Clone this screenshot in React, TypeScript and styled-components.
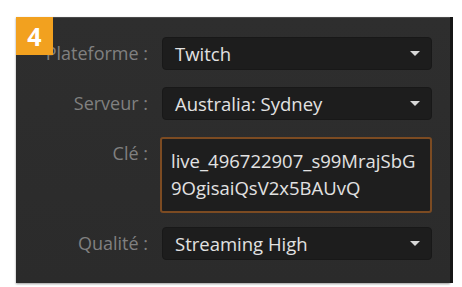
import * as React from "react";
import styled, { createGlobalStyle } from "styled-components";

const GlobalStyle = createGlobalStyle`
  html, body {
    margin: 0;
    padding: 0;
    background: #ffffff;
    font-family: "Open Sans", "Noto Sans", sans-serif;
  }
`;

const PageStyled = styled.div`
  width: 462px;
  height: 287px;
  padding: 17px 0 0 16px;
  box-sizing: border-box;
`;

const Panel = styled.div`
  position: relative;
  width: 434px;
  height: 266px;
  box-sizing: border-box;
  background: linear-gradient(#2e2e2e, #2b2b2b);
  border-top: 1px solid #4a4a4a;
  box-shadow: 3px 0 0 #151515, 0 1px 2px rgba(0, 0, 0, 0.4);
  padding: 19px 18px 0 0;
  display: grid;
  grid-template-columns: 132px 1fr;
  align-content: start;
  column-gap: 14px;
  row-gap: 17px;
  align-items: start;
`;

const Badge = styled.div`
  position: absolute;
  left: 0;
  top: -1px;
  width: 37px;
  height: 38px;
  background: #f2a11f;
  color: #ffffff;
  font-family: "Open Sans", sans-serif;
  font-weight: 700;
  font-size: 25px;
  line-height: 38px;
  text-align: center;
  z-index: 2;
`;

const Label = styled.div`
  color: #808080;
  font-size: 18px;
  text-align: right;
  line-height: 33px;
  white-space: nowrap;
`;

const Select = styled.div`
  height: 33px;
  box-sizing: border-box;
  background: #1d1d1d;
  border: 1px solid #181818;
  border-radius: 4px;
  display: flex;
  align-items: center;
  justify-content: space-between;
  padding: 0 11px 0 12px;
  color: #e2e2e2;
  font-size: 18.5px;
`;

const Arrow = styled.span`
  width: 0;
  height: 0;
  border-left: 5px solid transparent;
  border-right: 5px solid transparent;
  border-top: 5px solid #d8d8d8;
`;

const KeyBox = styled.div`
  height: 76px;
  box-sizing: border-box;
  background: #1e1e1e;
  border: 2px solid #7c4b22;
  border-radius: 3px;
  padding: 8px 4px 0 9px;
  color: #e2e2e2;
  font-size: 18.5px;
  line-height: 27px;
  margin: 0 0 -3px -2px;
  white-space: nowrap;
  overflow: hidden;
`;

function Dropdown({ value }: { value: string }) {
  return (
    <Select>
      <span>{value}</span>
      <Arrow />
    </Select>
  );
}

export default function App() {
  return (
    <PageStyled>
      <GlobalStyle />
      <Panel>
        <Badge>4</Badge>
        <Label>Plateforme :</Label>
        <Dropdown value="Twitch" />
        <Label>Serveur :</Label>
        <Dropdown value="Australia: Sydney" />
        <Label>Clé :</Label>
        <KeyBox>
          live_496722907_s99MrajSbG
          <br />
          9OgisaiQsV2x5BAUvQ
        </KeyBox>
        <Label>Qualité :</Label>
        <Dropdown value="Streaming High" />
      </Panel>
    </PageStyled>
  );
}
